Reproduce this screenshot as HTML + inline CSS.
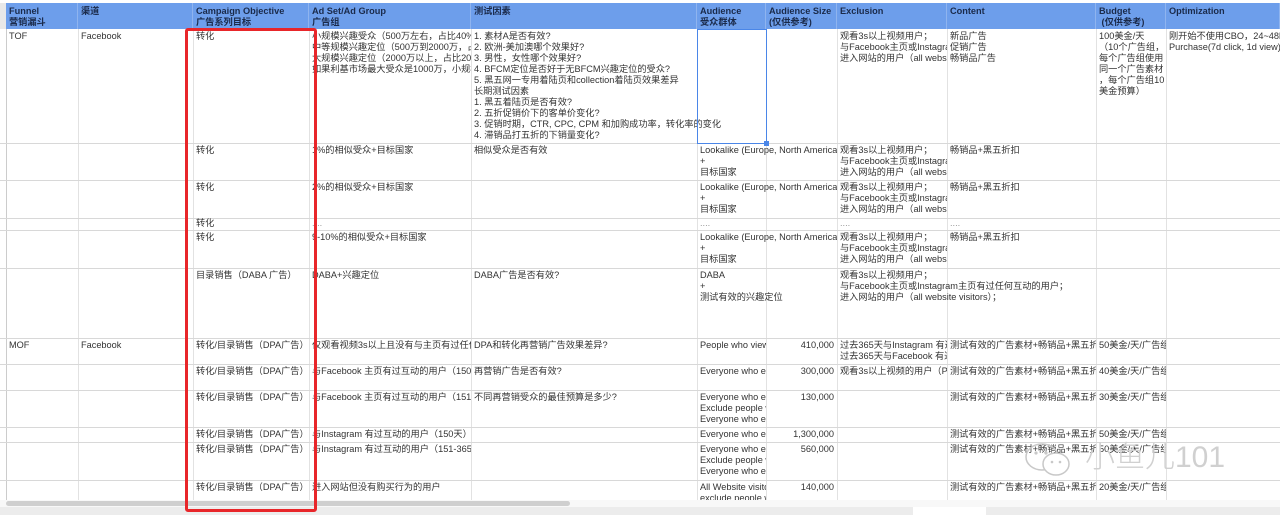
<!DOCTYPE html><html><head><meta charset="utf-8"><style>
*{margin:0;padding:0;box-sizing:border-box}
body{width:1280px;height:515px;overflow:hidden;background:#fff;position:relative;font-family:"Liberation Sans","Noto Sans CJK SC",sans-serif;font-size:9.2px;color:#333;line-height:11px}
.c{position:absolute;overflow:hidden;white-space:pre;padding:2px 0 0 3px}
.h{position:absolute;top:3px;height:26px;background:#6d9eeb;color:#1a2a4a;font-weight:bold;white-space:pre;padding:3px 0 0 3px;overflow:hidden;border-right:1px solid #8fb4ef}
.vl{position:absolute;top:29px;bottom:15px;width:1px;background:#e2e2e2}
.hl{position:absolute;left:0;right:0;height:1px;background:#d8d8d8}
.r{text-align:right;padding-right:3px}
</style></head><body>
<div class="h" style="left:0;width:6px;background:#e8e8e8;border:0"></div>
<div class="h" style="left:6px;width:72px">Funnel
营销漏斗</div>
<div class="h" style="left:78px;width:115px">渠道</div>
<div class="h" style="left:193px;width:116px">Campaign Objective
广告系列目标</div>
<div class="h" style="left:309px;width:162px">Ad Set/Ad Group
广告组</div>
<div class="h" style="left:471px;width:226px">测试因素</div>
<div class="h" style="left:697px;width:69px">Audience
受众群体</div>
<div class="h" style="left:766px;width:71px">Audience Size
(仅供参考)</div>
<div class="h" style="left:837px;width:110px">Exclusion</div>
<div class="h" style="left:947px;width:149px">Content</div>
<div class="h" style="left:1096px;width:70px">Budget
 (仅供参考)</div>
<div class="h" style="left:1166px;width:114px">Optimization</div>

<div class="vl" style="left:6px;background:#ccc"></div>
<div class="vl" style="left:78px"></div><div class="vl" style="left:193px"></div><div class="vl" style="left:309px"></div><div class="vl" style="left:471px"></div><div class="vl" style="left:697px"></div><div class="vl" style="left:766px"></div><div class="vl" style="left:837px"></div><div class="vl" style="left:947px"></div><div class="vl" style="left:1096px"></div><div class="vl" style="left:1166px"></div>

<div class="hl" style="top:143px"></div><div class="hl" style="top:180px"></div><div class="hl" style="top:218px"></div><div class="hl" style="top:230px"></div><div class="hl" style="top:268px"></div><div class="hl" style="top:338px"></div><div class="hl" style="top:364px"></div><div class="hl" style="top:390px"></div><div class="hl" style="top:427px"></div><div class="hl" style="top:442px"></div><div class="hl" style="top:480px"></div>

<div class="c" style="left:6px;top:29px;width:72px">TOF</div>
<div class="c" style="left:78px;top:29px;width:115px">Facebook</div>
<div class="c" style="left:193px;top:29px;width:116px">转化</div>
<div class="c" style="left:309px;top:29px;width:162px;height:114px">小规模兴趣受众（500万左右，占比40%
中等规模兴趣定位（500万到2000万，占
大规模兴趣定位（2000万以上，占比20%
如果利基市场最大受众是1000万，小规模</div>
<div class="c" style="left:471px;top:29px;width:300px;height:114px">1. 素材A是否有效?
2. 欧洲-美加澳哪个效果好?
3. 男性，女性哪个效果好?
4. BFCM定位是否好于无BFCM兴趣定位的受众?
5. 黑五网一专用着陆页和collection着陆页效果差异
长期测试因素
1. 黑五着陆页是否有效?
2. 五折促销价下的客单价变化?
3. 促销时期，CTR, CPC, CPM 和加购成功率，转化率的变化
4. 滞销品打五折的下销量变化?</div>
<div style="position:absolute;left:697px;top:29px;width:70px;height:115px;border:1.5px solid #4a86e8"></div>
<div style="position:absolute;left:764px;top:141px;width:5px;height:5px;background:#4a86e8"></div>
<div class="c" style="left:837px;top:29px;width:110px">观看3s以上视频用户；
与Facebook主页或Instagram
进入网站的用户（all website</div>
<div class="c" style="left:947px;top:29px;width:149px">新品广告
促销广告
畅销品广告</div>
<div class="c" style="left:1096px;top:29px;width:70px">100美金/天
（10个广告组，
每个广告组使用
同一个广告素材
，每个广告组10
美金预算）</div>
<div class="c" style="left:1166px;top:29px;width:114px">刚开始不使用CBO，24~48h
Purchase(7d click, 1d view)</div>
<div class="c" style="left:193px;top:143px;width:116px">转化</div>
<div class="c" style="left:309px;top:143px;width:162px">1%的相似受众+目标国家</div>
<div class="c" style="left:471px;top:143px;width:226px">相似受众是否有效</div>
<div class="c" style="left:697px;top:143px;width:140px">Lookalike (Europe, North America,
+
目标国家</div>
<div class="c" style="left:837px;top:143px;width:110px">观看3s以上视频用户；
与Facebook主页或Instagram
进入网站的用户（all website</div>
<div class="c" style="left:947px;top:143px;width:149px">畅销品+黑五折扣</div>
<div class="c" style="left:193px;top:180px;width:116px">转化</div>
<div class="c" style="left:309px;top:180px;width:162px">2%的相似受众+目标国家</div>
<div class="c" style="left:697px;top:180px;width:140px">Lookalike (Europe, North America,
+
目标国家</div>
<div class="c" style="left:837px;top:180px;width:110px">观看3s以上视频用户；
与Facebook主页或Instagram
进入网站的用户（all website</div>
<div class="c" style="left:947px;top:180px;width:149px">畅销品+黑五折扣</div>
<div class="c" style="left:193px;top:216px;width:116px">转化</div>
<div class="c" style="left:309px;top:216px;width:162px;color:#999">....</div>
<div class="c" style="left:697px;top:216px;width:69px;color:#999">....</div>
<div class="c" style="left:837px;top:216px;width:110px;color:#999">....</div>
<div class="c" style="left:947px;top:216px;width:110px;color:#999">....</div>
<div class="c" style="left:193px;top:230px;width:116px">转化</div>
<div class="c" style="left:309px;top:230px;width:162px">9-10%的相似受众+目标国家</div>
<div class="c" style="left:697px;top:230px;width:140px;height:38px">Lookalike (Europe, North America,
+
目标国家</div>
<div class="c" style="left:837px;top:230px;width:110px;height:38px">观看3s以上视频用户；
与Facebook主页或Instagram
进入网站的用户（all website</div>
<div class="c" style="left:947px;top:230px;width:149px">畅销品+黑五折扣</div>
<div class="c" style="left:193px;top:268px;width:116px">目录销售（DABA 广告）</div>
<div class="c" style="left:309px;top:268px;width:162px">DABA+兴趣定位</div>
<div class="c" style="left:471px;top:268px;width:226px">DABA广告是否有效?</div>
<div class="c" style="left:697px;top:268px;width:140px">DABA
+
测试有效的兴趣定位</div>
<div class="c" style="left:837px;top:268px;width:300px">观看3s以上视频用户；
与Facebook主页或Instagram主页有过任何互动的用户；
进入网站的用户（all website visitors）；</div>
<div class="c" style="left:6px;top:338px;width:72px">MOF</div>
<div class="c" style="left:78px;top:338px;width:115px">Facebook</div>
<div class="c" style="left:193px;top:338px;width:116px">转化/目录销售（DPA广告）</div>
<div class="c" style="left:309px;top:338px;width:162px">仅观看视频3s以上且没有与主页有过任何</div>
<div class="c" style="left:471px;top:338px;width:226px">DPA和转化再营销广告效果差异?</div>
<div class="c" style="left:697px;top:338px;width:69px">People who view</div>
<div class="c r" style="left:766px;top:338px;width:71px">410,000</div>
<div class="c" style="left:837px;top:338px;width:110px">过去365天与Instagram 有过
过去365天与Facebook 有过</div>
<div class="c" style="left:947px;top:338px;width:149px">测试有效的广告素材+畅销品+黑五折扣</div>
<div class="c" style="left:1096px;top:338px;width:70px">50美金/天/广告组</div>
<div class="c" style="left:193px;top:364px;width:116px">转化/目录销售（DPA广告）</div>
<div class="c" style="left:309px;top:364px;width:162px">与Facebook 主页有过互动的用户（150天</div>
<div class="c" style="left:471px;top:364px;width:226px">再营销广告是否有效?</div>
<div class="c" style="left:697px;top:364px;width:69px">Everyone who en</div>
<div class="c r" style="left:766px;top:364px;width:71px">300,000</div>
<div class="c" style="left:837px;top:364px;width:110px">观看3s以上视频的用户（Pe</div>
<div class="c" style="left:947px;top:364px;width:149px">测试有效的广告素材+畅销品+黑五折扣</div>
<div class="c" style="left:1096px;top:364px;width:70px">40美金/天/广告组</div>
<div class="c" style="left:193px;top:390px;width:116px">转化/目录销售（DPA广告）</div>
<div class="c" style="left:309px;top:390px;width:162px">与Facebook 主页有过互动的用户（151-</div>
<div class="c" style="left:471px;top:390px;width:226px">不同再营销受众的最佳预算是多少?</div>
<div class="c" style="left:697px;top:390px;width:69px">Everyone who en
Exclude people w
Everyone who en</div>
<div class="c r" style="left:766px;top:390px;width:71px">130,000</div>
<div class="c" style="left:947px;top:390px;width:149px">测试有效的广告素材+畅销品+黑五折扣</div>
<div class="c" style="left:1096px;top:390px;width:70px">30美金/天/广告组</div>
<div class="c" style="left:193px;top:427px;width:116px">转化/目录销售（DPA广告）</div>
<div class="c" style="left:309px;top:427px;width:162px">与Instagram 有过互动的用户（150天）</div>
<div class="c" style="left:697px;top:427px;width:69px">Everyone who en</div>
<div class="c r" style="left:766px;top:427px;width:71px">1,300,000</div>
<div class="c" style="left:947px;top:427px;width:149px">测试有效的广告素材+畅销品+黑五折扣</div>
<div class="c" style="left:1096px;top:427px;width:70px">50美金/天/广告组</div>
<div class="c" style="left:193px;top:442px;width:116px">转化/目录销售（DPA广告）</div>
<div class="c" style="left:309px;top:442px;width:162px">与Instagram 有过互动的用户（151-365天）</div>
<div class="c" style="left:697px;top:442px;width:69px">Everyone who en
Exclude people w
Everyone who en</div>
<div class="c r" style="left:766px;top:442px;width:71px">560,000</div>
<div class="c" style="left:947px;top:442px;width:149px">测试有效的广告素材+畅销品+黑五折扣</div>
<div class="c" style="left:1096px;top:442px;width:70px">50美金/天/广告组</div>
<div class="c" style="left:193px;top:480px;width:116px">转化/目录销售（DPA广告）</div>
<div class="c" style="left:309px;top:480px;width:162px">进入网站但没有购买行为的用户</div>
<div class="c" style="left:697px;top:480px;width:69px;height:20px">All Website visito
exclude people w</div>
<div class="c r" style="left:766px;top:480px;width:71px">140,000</div>
<div class="c" style="left:947px;top:480px;width:149px">测试有效的广告素材+畅销品+黑五折扣</div>
<div class="c" style="left:1096px;top:480px;width:70px">20美金/天/广告组</div>

<div style="position:absolute;left:0;top:500px;width:1280px;height:7px;background:#f8f8f8"></div>
<div style="position:absolute;left:6px;top:501px;width:564px;height:5px;background:#cfcfcf;border-radius:3px"></div>
<div style="position:absolute;left:0;top:507px;width:1280px;height:8px;background:#ececec"></div>
<div style="position:absolute;left:913px;top:507px;width:73px;height:8px;background:#fff"></div>

<svg style="position:absolute;left:1020px;top:440px" width="60" height="40" viewBox="0 0 60 40"><g fill="none" stroke="#c8c8c8" stroke-width="1.5"><ellipse cx="22" cy="17" rx="16" ry="13"/><ellipse cx="36" cy="24" rx="13" ry="11" fill="#fff"/></g><g fill="#c8c8c8"><circle cx="16" cy="13" r="1.6"/><circle cx="26" cy="13" r="1.6"/><circle cx="32" cy="22" r="1.3"/><circle cx="40" cy="22" r="1.3"/></g></svg>
<div style="position:absolute;left:1085px;top:440px;font-size:30px;line-height:36px;color:#d0d0d0;font-family:'Liberation Sans','Noto Sans CJK SC',sans-serif;font-weight:300">小鱼儿101</div>

<div style="position:absolute;left:185px;top:28px;width:132px;height:484px;border:3px solid #e8262a;border-radius:3px"></div>
</body></html>
